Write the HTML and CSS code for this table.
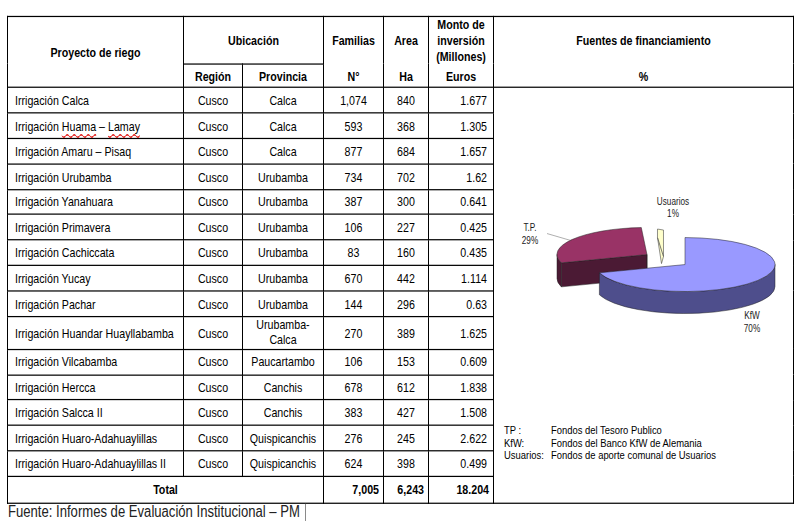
FILE: index.html
```html
<!DOCTYPE html>
<html lang="es">
<head>
<meta charset="utf-8">
<title>Proyectos de riego</title>
<link rel="stylesheet" href="styles.css">
</head>
<body>
<div class="sheet">
<table class="t">
<colgroup>
<col class="c1"><col class="c2"><col class="c3"><col class="c4"><col class="c5"><col class="c6"><col class="c7">
</colgroup>
<tr class="h1">
<th rowspan="2">Proyecto de riego</th>
<th colspan="2">Ubicación</th>
<th class="nb">Familias</th>
<th class="nb">Area</th>
<th class="nb monto">Monto de<br>inversión<br>(Millones)</th>
<th class="nb">Fuentes de financiamiento</th>
</tr>
<tr class="h2">
<th>Región</th><th>Provincia</th><th class="nt">N°</th><th class="nt">Ha</th><th class="nt">Euros</th><th class="nt">%</th>
</tr>
<tr class="r"><td class="name">Irrigación Calca</td><td>Cusco</td><td>Calca</td><td>1,074</td><td>840</td><td class="num">1.677</td>
<td rowspan="16" class="chart">
<svg class="pie" viewBox="494 147.54 299 131.15" width="299" height="131.15" xmlns="http://www.w3.org/2000/svg">
<g transform="scale(1 0.81967)">
<line x1="547" y1="233" x2="571" y2="240" stroke="#9a9a9a" stroke-width="0.8"/>
<path d="M647,254 L561.4,262.3 L561.4,286.3 L647,278 Z" fill="#4b1a34" stroke="#222" stroke-width="0.5"/>
<path d="M561.4,262.3 A90,27 0 0 1 557,254 L557,278 A90,27 0 0 0 561.4,286.3 Z" fill="#4b1a34" stroke="#222" stroke-width="0.5"/>
<path d="M647,254 L647,278" stroke="#222" stroke-width="0.6"/>
<path d="M647,254 L561.4,262.3 A90,27 0 0 1 641.3,227 Z" fill="#993366" stroke="#222" stroke-width="0.5"/>
<polygon points="657.5,228.5 663.5,229.5 663.5,256 661.5,263 657.5,237" fill="#ffffcc" stroke="#444" stroke-width="0.6"/>
<line x1="657.5" y1="237" x2="663.5" y2="256" stroke="#555" stroke-width="0.8"/>
<path d="M775,264 A90,27 0 0 1 599.4,272.3 L599.4,294.3 A90,27 0 0 0 775,286 Z" fill="#4e4e8c" stroke="#222" stroke-width="0.5"/>
<path d="M685,264 L685,237 A90,27 0 1 1 599.4,272.3 Z" fill="#9999ff" stroke="#222" stroke-width="0.5"/>
</g>
<text class="lbl" x="673" y="167.62" text-anchor="middle">Usuarios</text>
<text class="lbl" x="673" y="177.46" text-anchor="middle">1%</text>
<text class="lbl" x="530" y="188.93" text-anchor="middle">T.P.</text>
<text class="lbl" x="530" y="199.59" text-anchor="middle">29%</text>
<text class="lbl" x="752" y="261.07" text-anchor="middle">KfW</text>
<text class="lbl" x="752" y="271.72" text-anchor="middle">70%</text>
</svg>
<div class="legend">
<span>TP :</span><span>Fondos del Tesoro Publico</span>
<span>KfW:</span><span>Fondos del Banco KfW de Alemania</span>
<span>Usuarios:</span><span>Fondos de aporte comunal de Usuarios</span>
</div>
</td></tr>
<tr class="r"><td class="name">Irrigación <span class="sp">Huama</span> – <span class="sp">Lamay</span></td><td>Cusco</td><td>Calca</td><td>593</td><td>368</td><td class="num">1.305</td></tr>
<tr class="r"><td class="name">Irrigación Amaru – Pisaq</td><td>Cusco</td><td>Calca</td><td>877</td><td>684</td><td class="num">1.657</td></tr>
<tr class="r"><td class="name">Irrigación Urubamba</td><td>Cusco</td><td>Urubamba</td><td>734</td><td>702</td><td class="num">1.62</td></tr>
<tr class="r"><td class="name">Irrigación Yanahuara</td><td>Cusco</td><td>Urubamba</td><td>387</td><td>300</td><td class="num">0.641</td></tr>
<tr class="r"><td class="name">Irrigación Primavera</td><td>Cusco</td><td>Urubamba</td><td>106</td><td>227</td><td class="num">0.425</td></tr>
<tr class="r"><td class="name">Irrigación Cachiccata</td><td>Cusco</td><td>Urubamba</td><td>83</td><td>160</td><td class="num">0.435</td></tr>
<tr class="r"><td class="name">Irrigación Yucay</td><td>Cusco</td><td>Urubamba</td><td>670</td><td>442</td><td class="num">1.114</td></tr>
<tr class="r"><td class="name">Irrigación Pachar</td><td>Cusco</td><td>Urubamba</td><td>144</td><td>296</td><td class="num">0.63</td></tr>
<tr class="tall"><td class="name">Irrigación Huandar Huayllabamba</td><td>Cusco</td><td class="two">Urubamba-<br>Calca</td><td>270</td><td>389</td><td class="num">1.625</td></tr>
<tr class="r"><td class="name">Irrigación Vilcabamba</td><td>Cusco</td><td>Paucartambo</td><td>106</td><td>153</td><td class="num">0.609</td></tr>
<tr class="r"><td class="name">Irrigación Hercca</td><td>Cusco</td><td>Canchis</td><td>678</td><td>612</td><td class="num">1.838</td></tr>
<tr class="r"><td class="name">Irrigación Salcca II</td><td>Cusco</td><td>Canchis</td><td>383</td><td>427</td><td class="num">1.508</td></tr>
<tr class="r"><td class="name">Irrigación Huaro-Adahuaylillas</td><td>Cusco</td><td>Quispicanchis</td><td>276</td><td>245</td><td class="num">2.622</td></tr>
<tr class="r"><td class="name">Irrigación Huaro-Adahuaylillas II</td><td>Cusco</td><td>Quispicanchis</td><td>624</td><td>398</td><td class="num">0.499</td></tr>
<tr class="tot"><td colspan="3" class="tlabel">Total</td><td class="tnum">7,005</td><td class="tnum">6,243</td><td class="tnum">18.204</td></tr>
</table>
<p class="src">Fuente: Informes de Evaluación Institucional – PM<span class="caret"></span></p>
</div>
</body>
</html>
```
FILE: styles.css
```css
/* The source document is a horizontally compressed Arial rendering:
   the sheet is laid out at 1/1.22 height and stretched vertically. */
html, body {
  margin: 0;
  padding: 0;
  background: #ffffff;
}
body {
  min-height: 524px;
  font-family: "Liberation Sans", Arial, sans-serif;
  color: #000;
}
.sheet {
  padding: 13.11px 0 0 7px;
  transform: scaleY(1.22);
  transform-origin: 0 0;
}
.t {
  border-collapse: collapse;
  table-layout: fixed;
  width: 786px;
  font-size: 10.66px;
}
.c1 { width: 176px; }
.c2 { width: 59px; }
.c3 { width: 81px; }
.c4 { width: 60px; }
.c5 { width: 45px; }
.c6 { width: 65px; }
.c7 { width: 300px; }
.t th, .t td {
  border: 1px solid #000;
  padding: 0;
  text-align: center;
  vertical-align: middle;
  line-height: 12.3px;
}
.t th {
  font-weight: bold;
}
.t th.nb { border-bottom: none; }
.t th.nt { border-top: none; }
.h1 { height: 38.52px; }
.h2 { height: 19.67px; }
.r { height: 20.82px; }
.tall { height: 27.05px; }
.tot { height: 22.13px; }
.t th.monto { line-height: 12.7px; }
.t td.name {
  text-align: left;
  padding-left: 7px;
  white-space: nowrap;
}
.t td.num {
  text-align: right;
  padding-right: 6px;
}
.t td.two { line-height: 11.5px; }
.sp {
  text-decoration: underline wavy #e0201c;
  text-decoration-thickness: 1px;
  text-underline-offset: 1.6px;
}
.t td.tlabel { font-weight: bold; }
.t td.tnum {
  font-weight: bold;
  text-align: right;
  padding-right: 4px;
}
.t td.chart {
  vertical-align: top;
  text-align: left;
}
.pie {
  display: block;
  margin-top: 75.4px;
}
.lbl {
  font-family: "Liberation Sans", Arial, sans-serif;
  font-size: 8.2px;
  fill: #1a1a1a;
}
.legend {
  display: grid;
  grid-template-columns: 47px auto;
  margin: 68.85px 0 0 10px;
  font-size: 9.43px;
  line-height: 10.25px;
}
.src {
  margin: 0;
  padding-left: 1px;
  font-size: 13.1px;
  line-height: 13.1px;
  color: #222;
  display: flex;
  align-items: center;
}
.caret {
  display: inline-block;
  width: 0;
  height: 13.9px;
  border-left: 1px solid #8a8a8a;
  margin-left: 5px;
}
```
